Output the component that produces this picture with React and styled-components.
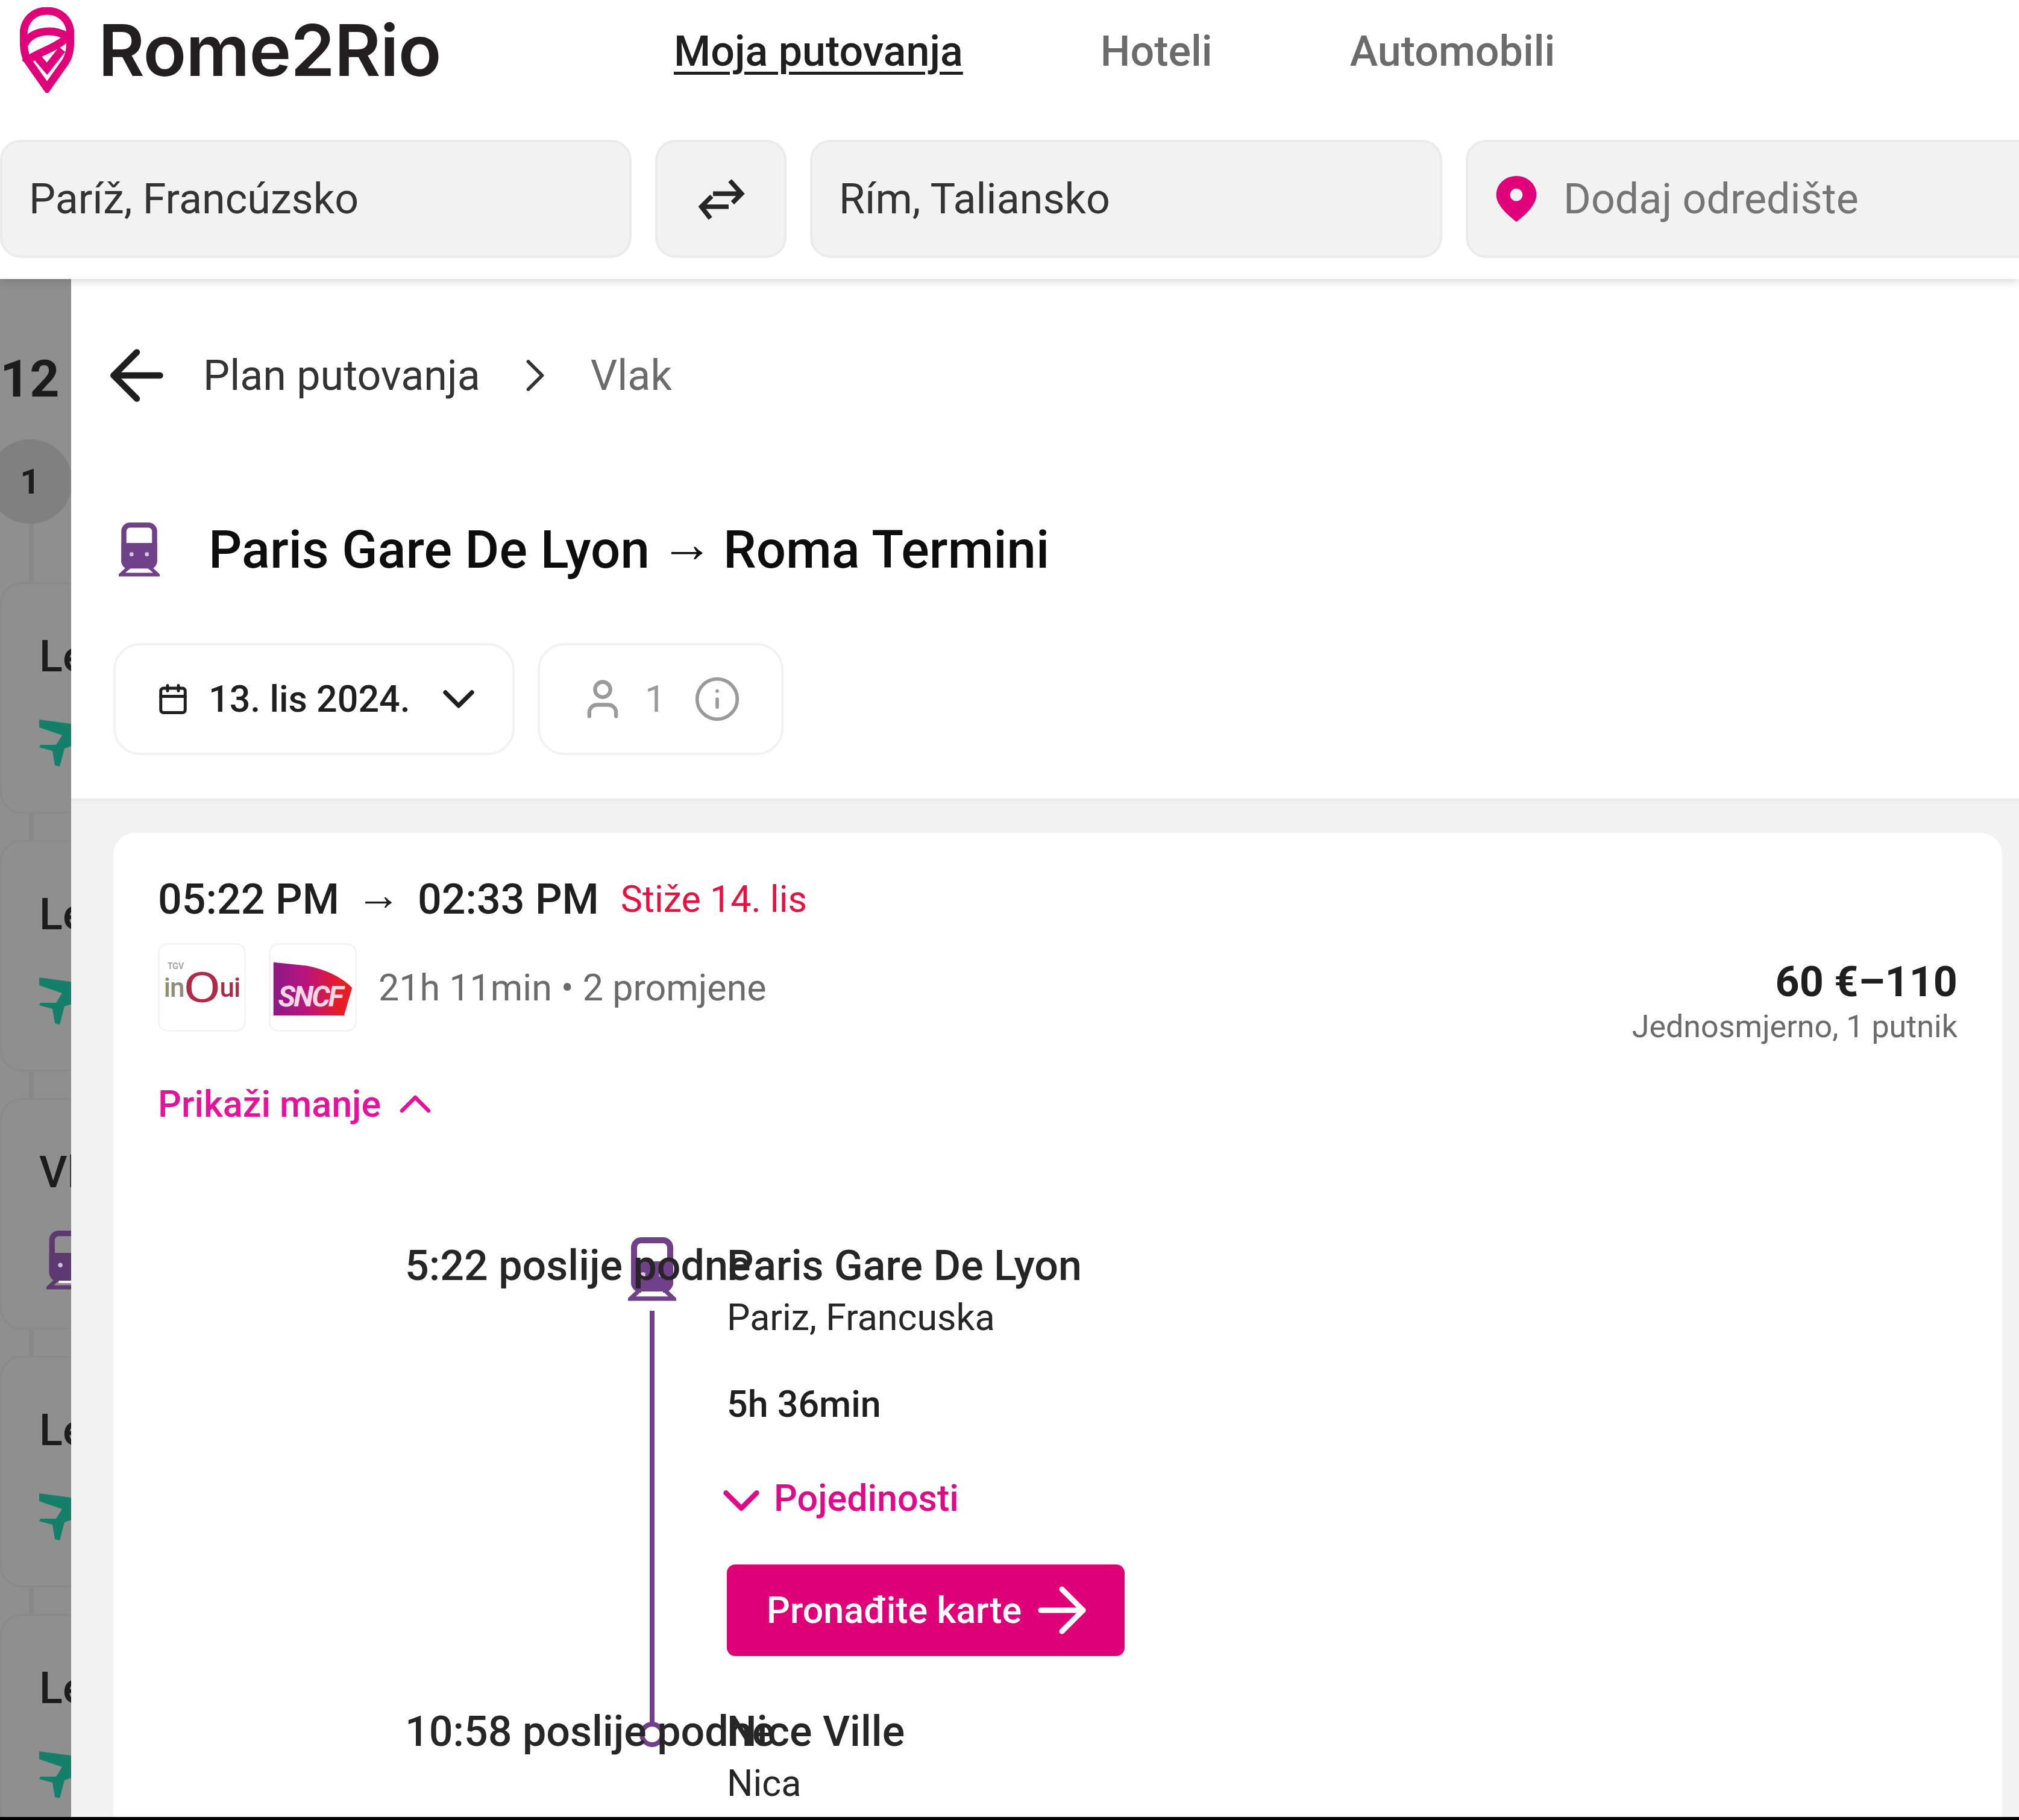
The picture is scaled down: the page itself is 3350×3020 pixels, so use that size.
import React from "react";
import styled, { createGlobalStyle } from "styled-components";
import {
  ArrowLeft,
  ArrowRight,
  Calendar,
  ChevronDown,
  ChevronRight,
  ChevronUp,
  Info,
  User,
} from "lucide-react";

const GlobalStyle = createGlobalStyle`
  html, body {
    margin: 0;
    padding: 0;
    background: #fff;
  }
  body {
    font-family: Roboto, "Liberation Sans", sans-serif;
    color: #1f1f1f;
  }
`;

const Page = styled.div`
  width: 3350px;
  height: 3020px;
  overflow: hidden;
  display: flex;
  flex-direction: column;
  border-bottom: 5px solid #000;
  box-sizing: border-box;
`;

const Header = styled.header`
  height: 463px;
  flex: none;
  position: relative;
  z-index: 2;
  background: #fff;
  box-shadow: 0 4px 14px rgba(0, 0, 0, 0.16);
  display: flex;
  flex-direction: column;
`;

const TopBar = styled.div`
  height: 232px;
  display: flex;
  align-items: flex-start;
`;

const Brand = styled.div`
  width: 1118px;
  height: 166px;
  display: flex;
  align-items: center;
  padding-left: 33px;
  gap: 40px;
  box-sizing: border-box;
`;

const Wordmark = styled.span`
  font-family: Inter, sans-serif;
  font-size: 118px;
  font-weight: 600;
  letter-spacing: -1px;
  color: #231f20;
`;

const Nav = styled.nav`
  height: 170px;
  display: flex;
  align-items: center;
  gap: 228px;
`;

const NavLink = styled.a`
  font-size: 70px;
  font-weight: 500;
  color: ${(p) => (p.$active ? "#1f1f1f" : "#6b6b6b")};
  text-decoration: ${(p) => (p.$active ? "underline" : "none")};
  text-underline-offset: 10px;
  text-decoration-thickness: 5px;
`;

const SearchRow = styled.div`
  display: flex;
  gap: 39px;
  height: 196px;
`;

const SearchBox = styled.div`
  width: ${(p) => p.$w}px;
  flex: none;
  box-sizing: border-box;
  background: #f2f2f2;
  border: 4px solid #ebebeb;
  border-radius: 34px;
  display: flex;
  align-items: center;
  justify-content: ${(p) => (p.$center ? "center" : "flex-start")};
  padding: ${(p) => (p.$center ? "0" : "0 44px")};
  gap: 42px;
  font-size: 70px;
  color: ${(p) => (p.$muted ? "#757575" : "#333")};
`;

const Body = styled.div`
  flex: 1;
  display: flex;
  min-height: 0;
`;

const Sidebar = styled.aside`
  width: 118px;
  flex: none;
  overflow: hidden;
  background: #8f8f8f;
  padding-top: 121px;
  box-sizing: border-box;
`;

const Count = styled.div`
  font-size: 86px;
  font-weight: 700;
  line-height: 90px;
  color: #1c1c1c;
  width: 200px;
`;

const StepBadge = styled.div`
  margin: 55px 0 0 -20px;
  width: 140px;
  height: 140px;
  border-radius: 50%;
  background: #808080;
  display: flex;
  align-items: center;
  justify-content: center;
  font-size: 58px;
  font-weight: 700;
  color: #1c1c1c;
`;

const Connector = styled.div`
  width: 8px;
  height: ${(p) => p.$h}px;
  margin-left: 48px;
  background: #888888;
`;

const TripCard = styled.div`
  width: 500px;
  height: 384px;
  box-sizing: border-box;
  border: 3px solid #8a8a8a;
  border-radius: 36px;
  padding: 78px 0 0 62px;
`;

const TripName = styled.div`
  font-size: 72px;
  line-height: 86px;
  font-weight: 500;
  color: #1c1c1c;
`;

const TripIcon = styled.div`
  margin-top: ${(p) => (p.$train ? 53 : 61)}px;
  margin-left: ${(p) => (p.$train ? 12 : 0)}px;
  display: flex;
`;

const Main = styled.main`
  flex: 1;
  min-width: 0;
  display: flex;
  flex-direction: column;
  background: #f2f2f2;
`;

const Intro = styled.section`
  height: 867px;
  flex: none;
  box-sizing: border-box;
  background: #fff;
  border-bottom: 5px solid #ebebeb;
  padding: 118px 0 0 70px;
`;

const Crumbs = styled.div`
  display: flex;
  align-items: center;
  height: 84px;
  font-size: 70px;
  color: #333;
`;

const BackArrow = styled(ArrowLeft)`
  margin-left: -27px;
  flex: none;
`;

const CrumbChevron = styled(ChevronRight)`
  margin-left: 45px;
  flex: none;
`;

const CrumbLabel = styled.span`
  margin-left: ${(p) => p.$ml}px;
  color: ${(p) => (p.$muted ? "#6b6b6b" : "#333")};
`;

const TitleRow = styled.div`
  margin-top: 192px;
  height: 110px;
  display: flex;
  align-items: center;
  font-size: 87px;
  font-weight: 500;
  color: #0d0d0d;
  white-space: nowrap;
`;

const TitleIcon = styled.span`
  width: 158px;
  padding-left: 9px;
  box-sizing: border-box;
  flex: none;
  display: flex;
`;

const TitleArrow = styled.span`
  margin: 0 17px 0 18px;
  transform: translateY(-10px);
`;

const Chips = styled.div`
  display: flex;
  gap: 38px;
  margin-top: 100px;
`;

const Chip = styled.div`
  height: 186px;
  box-sizing: border-box;
  width: ${(p) => p.$w}px;
  border: 4px solid #f2f2f2;
  border-radius: 44px;
  display: flex;
  align-items: center;
  font-size: 61px;
  font-weight: ${(p) => (p.$muted ? 400 : 500)};
  color: ${(p) => (p.$muted ? "#9a9a9a" : "#1f1f1f")};
  padding-left: ${(p) => p.$pl}px;
`;

const ChipText = styled.span`
  margin-left: ${(p) => p.$ml}px;
`;

const ChipChevron = styled(ChevronDown)`
  margin-left: 36px;
  flex: none;
`;

const ChipInfo = styled(Info)`
  margin-left: 46px;
  flex: none;
`;

const Card = styled.article`
  margin: 52px 28px 0 70px;
  flex: 1;
  background: #fff;
  border-radius: 36px 36px 0 0;
  padding: 68px 74px 0;
  min-height: 0;
`;

const TimesRow = styled.div`
  display: flex;
  align-items: center;
  height: 84px;
  font-size: 70px;
  font-weight: 500;
  color: #1f1f1f;
  white-space: nowrap;
`;

const TimesArrow = styled.span`
  margin: 0 28px;
  font-size: 74px;
  font-weight: 700;
  transform: translateY(-8px);
`;

const NextDay = styled.span`
  margin-left: 36px;
  font-size: 61px;
  font-weight: 400;
  color: #e8103f;
`;

const SummaryRow = styled.div`
  display: flex;
  align-items: flex-start;
  justify-content: space-between;
  margin-top: 31px;
  height: 147px;
`;

const Operators = styled.div`
  display: flex;
  align-items: center;
  height: 147px;
  gap: 38px;
`;

const LogoTile = styled.div`
  position: relative;
  width: 146px;
  height: 147px;
  box-sizing: border-box;
  border: 3px solid #f4f4f4;
  border-radius: 16px;
  display: flex;
  align-items: center;
  justify-content: center;
`;

const InOui = styled.span`
  display: flex;
  align-items: center;
  height: 52px;
  font-size: 44px;
  line-height: 52px;
  font-weight: 500;
  letter-spacing: -1px;
  color: #b02a4a;
`;

const InOuiPrefix = styled.span`
  color: #8c8c80;
`;

const InOuiRing = styled.span`
  display: inline-block;
  margin: 0 6px;
  font-size: 70px;
  font-weight: 400;
  line-height: 52px;
  transform: scaleX(1.3);
  color: #b02a4a;
`;

const InOuiBrand = styled.span`
  position: absolute;
  left: 13px;
  top: 28px;
  font-size: 14px;
  line-height: 14px;
  font-weight: 500;
  color: #9a9a90;
`;

const Duration = styled.span`
  margin-left: -2px;
  font-size: 61px;
  color: #6b6b6b;
`;

const Price = styled.div`
  text-align: right;
  margin-top: 22px;
`;

const PriceValue = styled.div`
  font-size: 70px;
  font-weight: 700;
  line-height: 84px;
  color: #1f1f1f;
`;

const PriceNote = styled.div`
  font-size: 52px;
  line-height: 66px;
  color: #6b6b6b;
`;

const Toggle = styled.div`
  margin-top: 78px;
  display: flex;
  align-items: center;
  gap: 13px;
  height: 84px;
  font-size: 61px;
  font-weight: 500;
  color: #e6139a;
`;

const ToggleChevron = styled(ChevronUp)`
  flex: none;
`;

const Segment = styled.div`
  margin-top: 184px;
  margin-left: 410px;
  display: grid;
  grid-template-columns: 362px 172px 1fr;
`;

const Rail = styled.div`
  grid-column: 2;
  grid-row: 1 / span 3;
  display: flex;
  flex-direction: column;
  align-items: center;
  margin-top: -5px;
  width: 96px;
`;

const RailLine = styled.div`
  width: 8px;
  height: 690px;
  margin-top: 16px;
  background: #70408a;
`;

const RailStop = styled.div`
  width: 42px;
  height: 42px;
  box-sizing: border-box;
  margin-top: -8px;
  border: 8px solid #70408a;
  border-radius: 50%;
  background: #fff;
  flex: none;
`;

const StopTime = styled.div`
  grid-column: 1;
  grid-row: ${(p) => p.$row};
  font-size: 70px;
  font-weight: 500;
  line-height: 84px;
  white-space: nowrap;
  color: #262626;
`;

const StopInfo = styled.div`
  grid-column: 3;
  grid-row: ${(p) => p.$row};
`;

const StopName = styled.div`
  font-size: 70px;
  font-weight: 500;
  line-height: 84px;
  color: #262626;
`;

const StopPlace = styled.div`
  margin-top: 2px;
  font-size: 61px;
  line-height: 84px;
  color: #262626;
`;

const Leg = styled.div`
  grid-column: 3;
  grid-row: 2;
  display: flex;
  flex-direction: column;
  align-items: flex-start;
  height: 603px;
`;

const LegTime = styled.div`
  margin-top: 60px;
  font-size: 61px;
  font-weight: 500;
  line-height: 84px;
`;

const Details = styled.div`
  margin-top: 72px;
  height: 84px;
  display: flex;
  align-items: center;
  gap: 3px;
  font-size: 61px;
  font-weight: 500;
  color: #e00a88;
`;

const DetailsChevron = styled(ChevronDown)`
  margin: 8px 0 0 -27px;
  flex: none;
`;

const TicketButton = styled.a`
  margin-top: 68px;
  width: 660px;
  height: 152px;
  flex: none;
  box-sizing: border-box;
  border-radius: 14px;
  background: #df0077;
  color: #fff;
  font-size: 61px;
  font-weight: 500;
  display: flex;
  align-items: center;
  padding-left: 66px;
  gap: 7px;
`;

const ButtonArrow = styled(ArrowRight)`
  flex: none;
`;

const Plane = () => (
  <svg width="60" height="78" viewBox="0 0 60 78" fill="#15806a">
    <path d="M0 0 L60 8 L60 42 L42 48 L34 78 L26 76 L22 52 L0 46 L2 42 L28 42 L38 26 L0 13 Z" />
  </svg>
);

const Train = ({ w, h, color = "#70408a" }) => (
  <svg width={w} height={h} viewBox="0 0 80 106" fill="none">
    <rect x="10" y="5" width="60" height="82" rx="12" stroke={color} strokeWidth="10" />
    <path d="M5 40 H75 V75 A14 14 0 0 1 61 89 H19 A14 14 0 0 1 5 75 Z" fill={color} />
    <circle cx="25" cy="62" r="4" fill="#fff" opacity="0.7" />
    <circle cx="55" cy="62" r="4" fill="#fff" opacity="0.7" />
    <path d="M20 87 L4 102 H76 L60 87" stroke={color} strokeWidth="7" />
    <rect x="22" y="90" width="36" height="4" fill="#fff" />
    <rect x="12" y="98" width="56" height="5" fill={color} opacity="0.5" />
  </svg>
);

const Logo = () => (
  <svg width="90" height="142" viewBox="0 0 90 142" fill="none" stroke="#e0007a" strokeWidth="13">
    <path d="M45 134 L14 90 C8 80 6 70 6 46 C6 20 24 6 45 6 C66 6 84 20 84 46 C84 70 82 80 76 90 Z" />
    <path d="M8 62 C14 42 50 32 78 48 C72 64 20 78 8 92" />
    <path d="M26 80 L45 102 L70 70" />
  </svg>
);

const Swap = () => (
  <svg width="82" height="82" viewBox="0 0 76 76" fill="none" stroke="#262626" strokeWidth="7">
    <path d="M26 30 H70 M52 10 L70 30 L56 44" />
    <path d="M50 50 H8 M24 34 L8 50 L22 68" />
  </svg>
);

const MapPin = () => (
  <svg width="72" height="80" viewBox="0 0 74 84">
    <path
      fillRule="evenodd"
      fill="#e0007a"
      d="M37 2 C57 2 72 17 72 35 C72 50 58 66 37 82 C16 66 2 50 2 35 C2 17 17 2 37 2 Z M37 24 A11 11 0 1 0 37 46 A11 11 0 1 0 37 24 Z"
    />
  </svg>
);

const Sncf = () => (
  <svg width="138" height="96" viewBox="0 0 140 100">
    <defs>
      <linearGradient id="sncfGrad" x1="0" x2="1" y1="0" y2="0">
        <stop offset="0" stopColor="#8a1a82" />
        <stop offset="0.4" stopColor="#b8147f" />
        <stop offset="0.85" stopColor="#e81c25" />
      </linearGradient>
    </defs>
    <path d="M2 6 L60 12 Q110 22 138 50 L124 98 L2 98 Z" fill="url(#sncfGrad)" />
    <text
      x="10"
      y="82"
      fontFamily="Roboto, sans-serif"
      fontStyle="italic"
      fontWeight="700"
      fontSize="50"
      letterSpacing="-3"
      fill="#f6d7e4"
    >
      SNCF
    </text>
  </svg>
);

const trips = [
  { name: "Le", icon: "plane" },
  { name: "Le", icon: "plane" },
  { name: "Vl", icon: "train" },
  { name: "Le", icon: "plane" },
  { name: "Le", icon: "plane" },
];

const App = () => (
  <Page>
    <GlobalStyle />
    <Header>
      <TopBar>
        <Brand>
          <Logo />
          <Wordmark>Rome2Rio</Wordmark>
        </Brand>
        <Nav>
          <NavLink $active>Moja putovanja</NavLink>
          <NavLink>Hoteli</NavLink>
          <NavLink>Automobili</NavLink>
        </Nav>
      </TopBar>
      <SearchRow>
        <SearchBox $w={1048}>Paríž, Francúzsko</SearchBox>
        <SearchBox $w={218} $center>
          <Swap />
        </SearchBox>
        <SearchBox $w={1049}>Rím, Taliansko</SearchBox>
        <SearchBox $w={960} $muted>
          <MapPin />
          Dodaj odredište
        </SearchBox>
      </SearchRow>
    </Header>
    <Body>
      <Sidebar>
        <Count>12</Count>
        <StepBadge>1</StepBadge>
        <Connector $h={97} />
        {trips.map((trip, i) => (
          <React.Fragment key={i}>
            <TripCard>
              <TripName>{trip.name}</TripName>
              <TripIcon $train={trip.icon === "train"}>
                {trip.icon === "plane" ? (
                  <Plane />
                ) : (
                  <Train w={74} h={98} color="#5c3a70" />
                )}
              </TripIcon>
            </TripCard>
            <Connector $h={44} />
          </React.Fragment>
        ))}
      </Sidebar>
      <Main>
        <Intro>
          <Crumbs>
            <BackArrow size={132} strokeWidth={1.9} color="#1f1f1f" />
            <CrumbLabel $ml={44}>Plan putovanja</CrumbLabel>
            <CrumbChevron size={92} strokeWidth={1.5} color="#333" />
            <CrumbLabel $ml={46} $muted>
              Vlak
            </CrumbLabel>
          </Crumbs>
          <TitleRow>
            <TitleIcon>
              <Train w={68} h={90} />
            </TitleIcon>
            Paris Gare De Lyon
            <TitleArrow>→</TitleArrow>
            Roma Termini
          </TitleRow>
          <Chips>
            <Chip $w={666} $pl={68}>
              <Calendar size={54} strokeWidth={2.2} />
              <ChipText $ml={32}>13. lis 2024.</ChipText>
              <ChipChevron size={88} strokeWidth={2} />
            </Chip>
            <Chip $w={408} $pl={66} $muted>
              <User size={76} strokeWidth={2} />
              <ChipText $ml={32}>1</ChipText>
              <ChipInfo size={80} strokeWidth={1.7} />
            </Chip>
          </Chips>
        </Intro>
        <Card>
          <TimesRow>
            05:22 PM
            <TimesArrow>→</TimesArrow>
            02:33 PM
            <NextDay>Stiže 14. lis</NextDay>
          </TimesRow>
          <SummaryRow>
            <Operators>
              <LogoTile>
                <InOuiBrand>TGV</InOuiBrand>
                <InOui>
                  <InOuiPrefix>in</InOuiPrefix>
                  <InOuiRing>O</InOuiRing>ui
                </InOui>
              </LogoTile>
              <LogoTile>
                <Sncf />
              </LogoTile>
              <Duration>21h 11min • 2 promjene</Duration>
            </Operators>
            <Price>
              <PriceValue>60 €–110</PriceValue>
              <PriceNote>Jednosmjerno, 1 putnik</PriceNote>
            </Price>
          </SummaryRow>
          <Toggle>
            Prikaži manje
            <ToggleChevron size={88} strokeWidth={1.8} />
          </Toggle>
          <Segment>
            <Rail>
              <Train w={80} h={106} />
              <RailLine />
              <RailStop />
            </Rail>
            <StopTime $row={1}>5:22 poslije podne</StopTime>
            <StopInfo $row={1}>
              <StopName>Paris Gare De Lyon</StopName>
              <StopPlace>Pariz, Francuska</StopPlace>
            </StopInfo>
            <Leg>
              <LegTime>5h 36min</LegTime>
              <Details>
                <DetailsChevron size={102} strokeWidth={2} />
                Pojedinosti
              </Details>
              <TicketButton>
                Pronađite karte
                <ButtonArrow size={120} strokeWidth={1.8} />
              </TicketButton>
            </Leg>
            <StopTime $row={3}>10:58 poslije podne</StopTime>
            <StopInfo $row={3}>
              <StopName>Nice Ville</StopName>
              <StopPlace>Nica</StopPlace>
            </StopInfo>
          </Segment>
        </Card>
      </Main>
    </Body>
  </Page>
);

export default App;
